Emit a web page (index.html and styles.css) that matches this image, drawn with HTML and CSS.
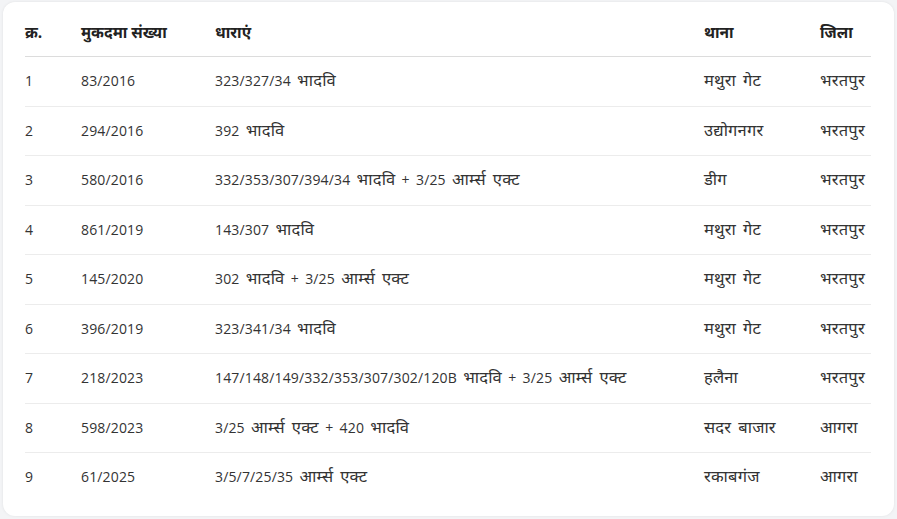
FILE: index.html
```html
<!DOCTYPE html>
<html lang="hi">
<head>
<meta charset="utf-8">
<link rel="stylesheet" href="styles.css">
</head>
<body>
<div class="card">
<table class="cases">
<colgroup>
<col class="c-no"><col class="c-case"><col class="c-sec"><col class="c-ps"><col class="c-dist">
</colgroup>
<thead>
<tr><th><span class="dv">क्र.</span></th><th><span class="dv">मुकदमा संख्या</span></th><th><span class="dv">धाराएं</span></th><th><span class="dv">थाना</span></th><th><span class="dv">जिला</span></th></tr>
</thead>
<tbody>
<tr><td>1</td><td>83/2016</td><td>323/327/34 <span class="dv">भादवि</span></td><td><span class="dv">मथुरा गेट</span></td><td><span class="dv">भरतपुर</span></td></tr>
<tr><td>2</td><td>294/2016</td><td>392 <span class="dv">भादवि</span></td><td><span class="dv">उद्योगनगर</span></td><td><span class="dv">भरतपुर</span></td></tr>
<tr><td>3</td><td>580/2016</td><td>332/353/307/394/34 <span class="dv">भादवि</span> + 3/25 <span class="dv">आर्म्स एक्ट</span></td><td><span class="dv">डीग</span></td><td><span class="dv">भरतपुर</span></td></tr>
<tr><td>4</td><td>861/2019</td><td>143/307 <span class="dv">भादवि</span></td><td><span class="dv">मथुरा गेट</span></td><td><span class="dv">भरतपुर</span></td></tr>
<tr><td>5</td><td>145/2020</td><td>302 <span class="dv">भादवि</span> + 3/25 <span class="dv">आर्म्स एक्ट</span></td><td><span class="dv">मथुरा गेट</span></td><td><span class="dv">भरतपुर</span></td></tr>
<tr><td>6</td><td>396/2019</td><td>323/341/34 <span class="dv">भादवि</span></td><td><span class="dv">मथुरा गेट</span></td><td><span class="dv">भरतपुर</span></td></tr>
<tr><td>7</td><td>218/2023</td><td>147/148/149/332/353/307/302/120B <span class="dv">भादवि</span> + 3/25 <span class="dv">आर्म्स एक्ट</span></td><td><span class="dv">हलैना</span></td><td><span class="dv">भरतपुर</span></td></tr>
<tr><td>8</td><td>598/2023</td><td>3/25 <span class="dv">आर्म्स एक्ट</span> + 420 <span class="dv">भादवि</span></td><td><span class="dv">सदर बाजार</span></td><td><span class="dv">आगरा</span></td></tr>
<tr><td>9</td><td>61/2025</td><td>3/5/7/25/35 <span class="dv">आर्म्स एक्ट</span></td><td><span class="dv">रकाबगंज</span></td><td><span class="dv">आगरा</span></td></tr>
</tbody>
</table>
</div>
</body>
</html>
```
FILE: styles.css
```css
html, body {
  margin: 0;
  padding: 0;
  background: #f3f4f6;
}
body {
  font-family: "Open Sans", "Noto Sans", "Noto Sans Devanagari", sans-serif;
  color: #333;
  font-size: 14px;
}
.card {
  margin: 2px 3px 3px 3px;
  background: #fff;
  border-radius: 12px;
  box-shadow: 0 0 3px rgba(0,0,0,0.08);
  padding: 11px 24px 13px 22px;
  box-sizing: border-box;
  height: 514px;
}
.cases {
  width: 846px;
  border-collapse: collapse;
  table-layout: fixed;
}
.c-no { width: 56px; }
.c-case { width: 134px; }
.c-sec { width: 489px; }
.c-ps { width: 116px; }
.c-dist { width: 51px; }
.dv {
  font-size: 15.5px;
  line-height: 12px;
}
td .dv {
  font-size: 16.5px;
  letter-spacing: 0.2px;
}
th {
  text-align: left;
  font-weight: 700;
  color: #222;
  padding: 10px 0 13px;
  line-height: 20px;
  height: 20px;
  border-bottom: 1px solid #dcdcdc;
  white-space: nowrap;
}
td {
  padding: 14px 0 15px;
  line-height: 19.5px;
  height: 19.5px;
  border-bottom: 1px solid #ececec;
  white-space: nowrap;
  word-spacing: 2.5px;
  letter-spacing: 0.15px;
}
tbody tr:last-child td {
  border-bottom: none;
}
```
